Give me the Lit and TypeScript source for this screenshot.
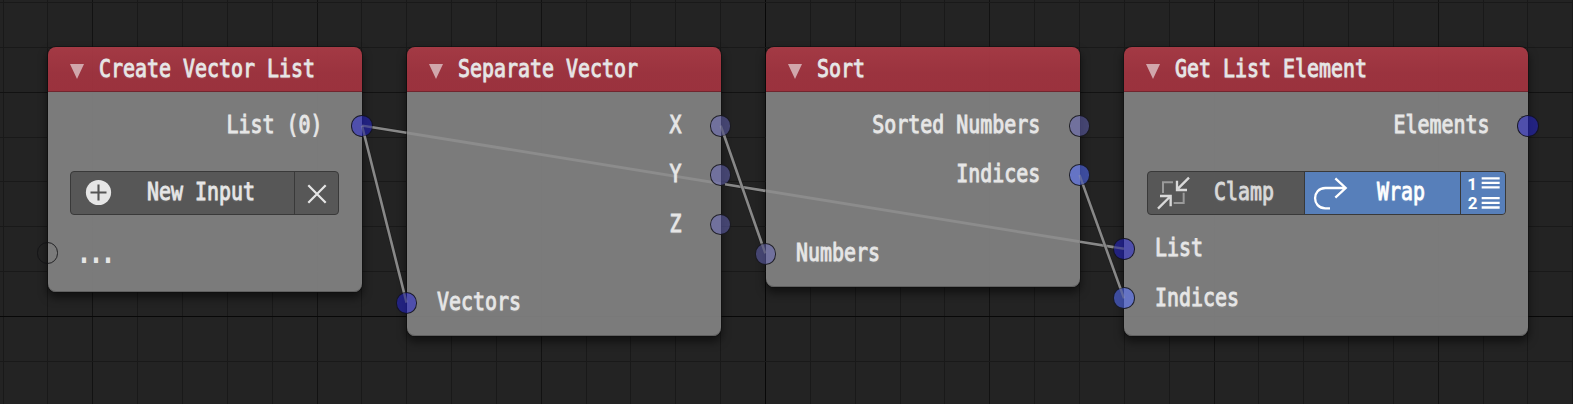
import { LitElement, html, svg, css } from "lit";
import { customElement, property } from "lit/decorators.js";

type Socket = { label: string; kind: string };
interface NodeData {
  title: string;
  x: number;
  width: number;
  height: number;
  outputs: Socket[];
  control?: "input" | "mode";
  inputs: Socket[];
}

const NODES: NodeData[] = [
  { title: "Create Vector List", x: 48, width: 314, height: 244.5, outputs: [{ label: "List (0)", kind: "list" }], control: "input", inputs: [{ label: "...", kind: "empty" }] },
  { title: "Separate Vector", x: 407, width: 313.6, height: 289.2, outputs: [{ label: "X", kind: "number" }, { label: "Y", kind: "number" }, { label: "Z", kind: "number" }], inputs: [{ label: "Vectors", kind: "list" }] },
  { title: "Sort", x: 766, width: 313.6, height: 239.6, outputs: [{ label: "Sorted Numbers", kind: "number" }, { label: "Indices", kind: "index" }], inputs: [{ label: "Numbers", kind: "number" }] },
  { title: "Get List Element", x: 1124.4, width: 403.6, height: 288.4, outputs: [{ label: "Elements", kind: "list" }], control: "mode", inputs: [{ label: "List", kind: "list" }, { label: "Indices", kind: "index" }] },
];

const LINKS = [
  [362, 125.6, 406.5, 302.6],
  [362, 125.6, 1124, 248.8],
  [720.7, 125.6, 765.3, 253.4],
  [1079.5, 175, 1124, 298.3],
];

@customElement("graph-node")
class GraphNode extends LitElement {
  @property({ attribute: false }) data!: NodeData;

  static styles = css`
    :host { display: block; position: relative; box-sizing: border-box; height: 100%; font-family: "DejaVu Sans Mono", monospace; font-size: 24px; line-height: 30px; color: #e6e6e6; }
    .card { position: relative; height: 100%; border-radius: 8px; box-shadow: 0 0 0 1px rgba(15,15,15,.55), 0 5px 8px 1px rgba(0,0,0,.5); display: flex; flex-direction: column; }
    .header { height: 44.7px; flex: none; box-sizing: border-box; border-bottom: 1px solid rgba(105,35,43,.85); border-radius: 8px 8px 0 0; background: linear-gradient(rgba(169,59,70,.96), rgba(160,52,64,.96) 60%, rgba(160,51,63,.96)); display: flex; align-items: center; padding-left: 22px; }
    .tri { width: 14px; height: 15px; margin-top: 5px; fill: #d1a6ab; flex: none; }
    .title { margin-left: 14.8px; }
    .body { flex: 1; min-height: 0; border-radius: 0 0 8px 8px; background: rgba(131,131,131,.92); padding-top: 9.3px; box-shadow: inset 0 -1px 0 rgba(90,90,90,.8); }
    .t { display: inline-block; white-space: pre; transform: scaleX(.8305); transform-origin: left; text-shadow: 0 1px 2px rgba(255,255,255,.22); -webkit-text-stroke: .85px currentColor; }
    .row { position: relative; height: 49.3px; display: flex; align-items: center; box-sizing: border-box; }
    .row .t { margin-top: -2px; }
    .out { justify-content: flex-end; padding-right: 39px; }
    .mode-node .out { padding-right: 38px; }
    .out .t { transform-origin: right; }
    .in { padding-left: 30.3px; }
    .in .t { margin-top: -1.6px; }
    .in .t.empty { margin-top: 1.6px; -webkit-text-stroke-width: 1.8px; }
    .gap { height: 29.3px; }
    .socket { position: absolute; top: 50%; width: 21.6px; height: 21.6px; margin-top: -10.9px; box-sizing: border-box; border-radius: 50%; border: 1.3px solid rgba(18,18,20,.85); }
    .out .socket { right: -10.8px; }
    .in .socket { left: -11.2px; }
    .socket.list { background: rgba(36,36,222,.5); }
    .socket.number { background: rgba(103,103,190,.51); }
    .socket.index { background: rgba(83,111,255,.56); }
    .bar { display: flex; height: 43.5px; box-sizing: border-box; border: 1px solid #393939; border-radius: 4px; background: #575757; overflow: hidden; }
    .bar.input { margin: 20.6px 22.7px 13.8px 22.2px; }
    .bar.mode { margin: 20.6px 21.8px 9.7px 22.8px; color: #d9d9d9; }
    .cell { display: flex; align-items: center; box-sizing: border-box; }
    .cell + .cell { border-left: 1px solid #393939; }
    .cell .t { margin-top: -1px; }
    .new { flex: 1; padding-left: 13.6px; min-width: 0; }
    .new .t { margin-left: 35.5px; }
    .close { width: 44.5px; padding-left: 11px; flex: none; }
    .clamp { width: 155.6px; padding-left: 8px; }
    .clamp .t { margin-left: 22.9px; }
    .wrap { flex: 1; padding-left: 8.5px; min-width: 0; }
    .wrap .t { margin-left: 28.8px; }
    .active { background: #577fba; color: #fff; }
    .many { width: 45px; padding-left: 4.5px; flex: none; }
    .icon { display: block; flex: none; overflow: visible; fill: none; }
    .i25 { width: 27px; height: 27px; }
    .i20 { width: 22px; height: 22px; margin-top: 1.5px; }
    .i35 { width: 34.67px; height: 34.67px; }
    .i36 { width: 36px; height: 36px; }
    .digit { font: bold 51px Roboto, sans-serif; fill: #fff; }
  `;

  private row(s: Socket, side: string) {
    return html`<div class="row ${side}"><span class="t ${s.kind}">${s.label}</span><span class="socket ${s.kind}"></span></div>`;
  }

  private inputBar() {
    return html`<div class="bar input">
      <div class="cell new">
        <svg class="icon i25" viewBox="0 0 27 27"><circle cx="13.5" cy="13.5" r="12.6" fill="#e6e6e6"/><path d="M13.5 5.5v16M5.5 13.5h16" stroke="#555" stroke-width="2.100"/></svg>
        <span class="t">New Input</span>
      </div>
      <div class="cell close">
        <svg class="icon i20" viewBox="0 0 22 22"><path d="M2.3 2.3l17.4 17.4M19.7 2.3L2.3 19.7" stroke="#e6e6e6" stroke-width="2.200"/></svg>
      </div>
    </div>`;
  }

  private modeBar() {
    return html`<div class="bar mode">
      <div class="cell clamp">
        <svg class="icon i35" viewBox="140 48 104 104"><path d="M161 99V67H191M223 98V129H193" stroke="#9a9a9a" stroke-width="6"/><path d="M239 53L203 89M203 62V90H233M146 146L184 108M152 108H184V139" stroke="#d9d9d9" stroke-width="7"/></svg>
        <span class="t">Clamp</span>
      </div>
      <div class="cell wrap active">
        <svg class="icon i35" viewBox="608 46 104 104"><path d="M675 53L706 82L675 111M704 82H645C604 82 604 143 645 143H659" stroke="#fff" stroke-width="7"/></svg>
        <span class="t">Wrap</span>
      </div>
      <div class="cell many active">
        <svg class="icon i36" viewBox="1066 46 108 108"><text class="digit" x="1070" y="90">1</text><text class="digit" x="1071" y="147">2</text><path d="M1113 56h54M1113 69.500h54M1113 83h54M1113 115.500h54M1113 129.500h54M1113 143.500h54" stroke="#fff" stroke-width="7"/></svg>
      </div>
    </div>`;
  }

  render() {
    const d = this.data;
    return html`<div class="card ${d.control ?? "plain"}-node">
      <div class="header"><svg class="tri" viewBox="0 0 14 15" preserveAspectRatio="none"><path d="M0 0H14L7 15Z"/></svg><span class="t title">${d.title}</span></div>
      <div class="body">
        ${d.outputs.map((s) => this.row(s, "out"))}
        ${d.control === "input" ? this.inputBar() : d.control === "mode" ? this.modeBar() : html`<div class="gap"></div>`}
        ${d.inputs.map((s) => this.row(s, "in"))}
      </div>
    </div>`;
  }
}

@customElement("app-root")
class AppRoot extends LitElement {
  static styles = css`
    :host { display: block; position: relative; width: 1573px; height: 404px; overflow: hidden; background: #232323; }
    .canvas { display: block; width: 1573px; height: 404px; }
    .minor { stroke: #191919; }
    .major { stroke: #121212; }
    .axis { stroke: #080808; }
    .veiled { stroke: #f0f0f0; stroke-width: 2.8; }
    .edge { stroke: rgba(20,20,20,.35); stroke-width: 4; }
    .link { stroke: #888; stroke-width: 2.6; }
    .tip { stroke: rgba(160,160,168,.36); stroke-width: 2.4; }
    .node { position: absolute; top: 47.3px; }
    .over { position: absolute; inset: 0; pointer-events: none; }
  `;

  private grid(vertical: boolean) {
    const step = 44.85;
    const origin = vertical ? 765 : 316;
    const lines = [];
    for (let i = -18; i <= 18; i++) {
      const p = Math.round(origin + i * step) + 0.5;
      if (p < 0 || p > (vertical ? 1573 : 404)) continue;
      const cls = i === 0 ? "axis" : i % 5 === 0 ? "major" : "minor";
      lines.push(vertical
        ? svg`<line class=${cls} x1=${p} x2=${p} y1="0" y2="404"/>`
        : svg`<line class=${cls} x1="0" x2="1573" y1=${p} y2=${p}/>`);
    }
    return lines;
  }

  /** The stretches of the long link that pass beneath the translucent node bodies. */
  private veiled() {
    const [x1, y1, x2, y2] = LINKS[1];
    const at = (x: number) => y1 + ((y2 - y1) * (x - x1)) / (x2 - x1);
    return NODES.slice(1, 3).map((n) => svg`<line class="veiled" x1=${n.x} y1=${at(n.x)} x2=${n.x + n.width} y2=${at(n.x + n.width)}/>`);
  }

  render() {
    return html`
      <svg class="canvas" viewBox="0 0 1573 404">${this.grid(true)}${this.grid(false)}${this.veiled()}</svg>
      ${NODES.map((n) => html`<graph-node class="node" .data=${n} style="left:${n.x}px;width:${n.width}px;height:${n.height}px"></graph-node>`)}
      <svg class="over" width="1573" height="404" viewBox="0 0 1573 404">
        ${LINKS.map(([x1, y1, x2, y2], i) => {
          const len = Math.hypot(x2 - x1, y2 - y1);
          const point = (d: number) => [x1 + ((x2 - x1) * d) / len, y1 + ((y2 - y1) * d) / len];
          const [ax, ay] = point(10.5);
          const [bx, by] = point(len - 10.5);
          const spans = i === 1 ? [[ax, ay, 406.5, 132.8], [725, 184.3, 765.5, 190.9], [1080, 241.7, bx, by]] : [[ax, ay, bx, by]];
          return svg`
            <line class="tip" x1=${x1} y1=${y1} x2=${ax} y2=${ay}/>
            <line class="tip" x1=${bx} y1=${by} x2=${x2} y2=${y2}/>
            ${spans.map(([a, b, c, d]) => svg`<line class="edge" x1=${a} y1=${b} x2=${c} y2=${d}/><line class="link" x1=${a} y1=${b} x2=${c} y2=${d}/>`)}`;
        })}
      </svg>`;
  }
}
